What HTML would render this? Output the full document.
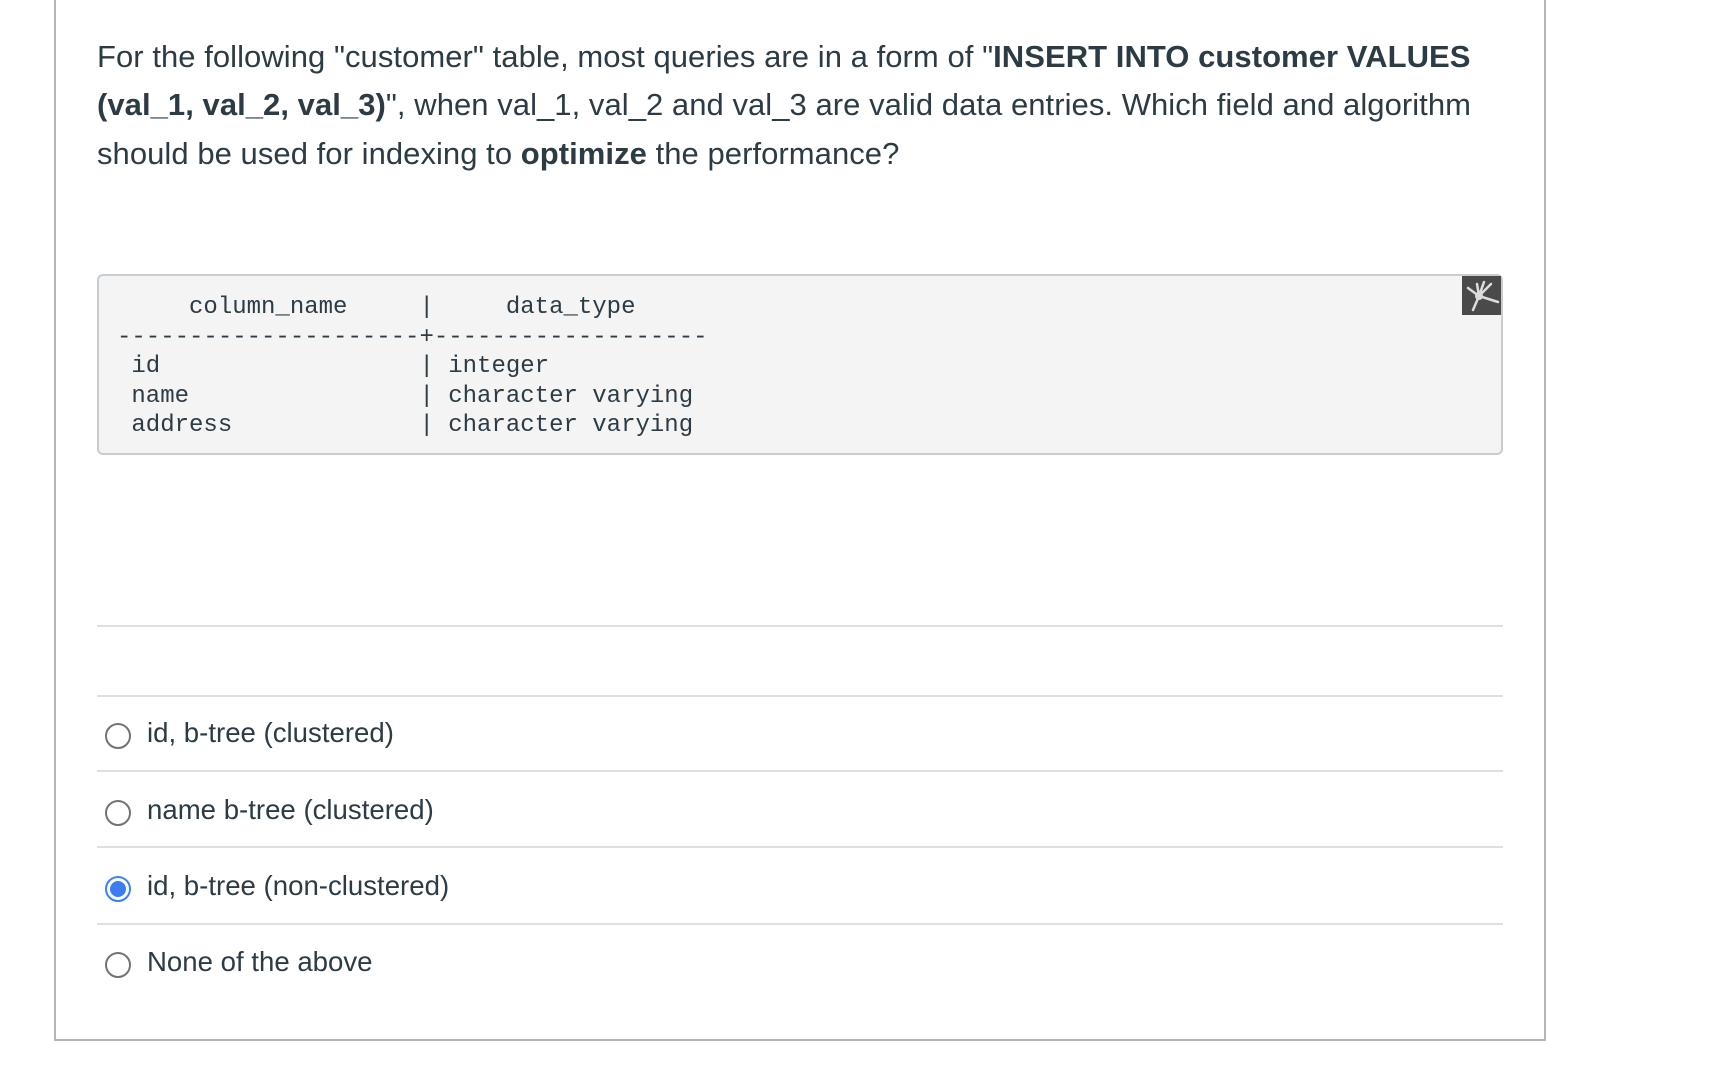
<!DOCTYPE html>
<html><head><meta charset="utf-8"><style>
body{margin:0;width:1716px;height:1066px;background:#fff;position:relative;overflow:hidden;font-family:"Liberation Sans",sans-serif;color:#2d3b45}
.box{position:absolute;left:54px;top:-2px;width:1488px;height:1041px;border:2px solid #b5b5b5;border-top:none}
.q{position:absolute;left:97px;top:33px;width:1500px;font-size:31px;line-height:48.4px;letter-spacing:0.05px;white-space:nowrap}
.code{position:absolute;left:97px;top:274px;width:1406px;height:181px;background:#f4f4f4;border:2px solid #c7cdd1;border-radius:6px;box-sizing:border-box}
.code pre{margin:0;position:absolute;left:18px;top:17px;font-family:"Liberation Mono",monospace;font-size:24px;line-height:29.6px;color:#2d3b45}
.icon{position:absolute;left:1462px;top:276px;width:39px;height:39px;background:#4a4a4a}
.hl{position:absolute;left:97px;width:1406px;height:2px;background:#dde0e2}
.r{position:absolute;left:105px;width:26px;height:26px;border:2px solid #737373;border-radius:50%;box-sizing:border-box}
.r.on{border:2px solid #3b82f6}
.r.on::after{content:"";position:absolute;left:3px;top:3px;width:16px;height:16px;border-radius:50%;background:#3b7cf0}
.t{position:absolute;left:147px;font-size:27.6px;line-height:30px}
</style></head><body>
<div class="box"></div>
<div class="q">For the following "customer" table, most queries are in a form of "<b>INSERT INTO customer VALUES</b><br><b>(val_1, val_2, val_3)</b>", when val_1, val_2 and val_3 are valid data entries. Which field and algorithm<br>should be used for indexing to <b>optimize</b> the performance?</div>
<div class="code"><pre>     column_name     |     data_type
---------------------+-------------------
 id                  | integer
 name                | character varying
 address             | character varying</pre></div>
<div class="icon"><svg width="39" height="39" viewBox="0 0 39 39"><g stroke="#ddd" stroke-width="2.5" stroke-linecap="round" fill="none"><path d="M17 20 L11 34"/><path d="M17 20 L6 12"/><path d="M17 20 L15 8"/><path d="M17 20 L22 6"/><path d="M17 20 L29 8"/><path d="M17 20 L36 26"/></g><circle cx="17" cy="20" r="4" fill="#ddd"/></svg></div>
<div class="hl" style="top:625px"></div>
<div class="hl" style="top:695px"></div>
<div class="hl" style="top:770px"></div>
<div class="hl" style="top:846px"></div>
<div class="hl" style="top:923px"></div>
<div class="r" style="top:723px"></div><div class="t" style="top:718px">id, b-tree (clustered)</div>
<div class="r" style="top:800px"></div><div class="t" style="top:795px">name b-tree (clustered)</div>
<div class="r on" style="top:876px"></div><div class="t" style="top:871px">id, b-tree (non-clustered)</div>
<div class="r" style="top:952px"></div><div class="t" style="top:947px">None of the above</div>
</body></html>
